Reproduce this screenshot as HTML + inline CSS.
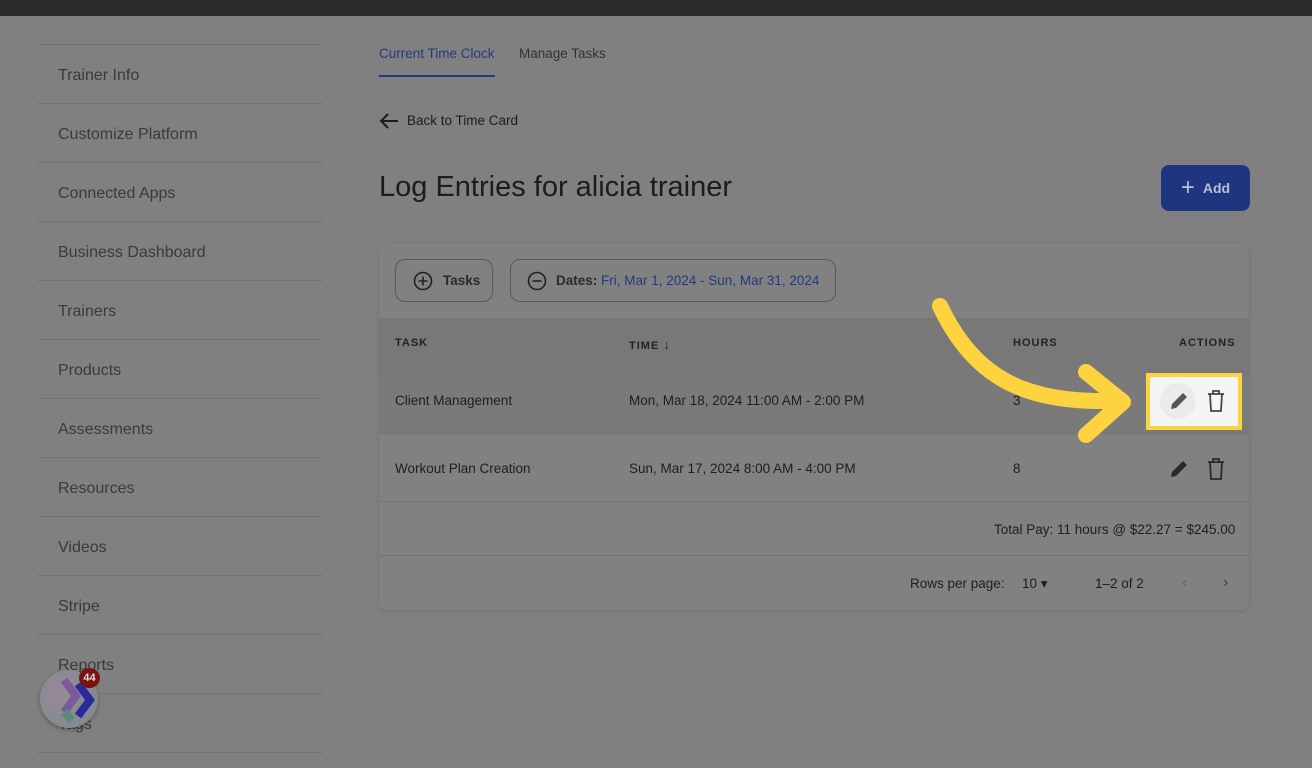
<!DOCTYPE html>
<html><head><meta charset="utf-8"><style>
*{margin:0;padding:0;box-sizing:border-box}
body{width:1312px;height:768px;overflow:hidden;background:#808080;font-family:"Liberation Sans",sans-serif;color:#1c1c1c;position:relative}
.top{position:absolute;left:0;top:0;width:1312px;height:16px;background:#2b2b2b}
.side{position:absolute;left:37px;top:44px;width:286px}
.side div{height:59px;border-top:1px solid #747474;padding-left:21px;line-height:62px;font-size:16px;color:#3a3a3a}
.abs{position:absolute}
.tab{font-size:13.5px}
.card{position:absolute;left:379px;top:244px;width:870px;height:366px;background:#818181;border-radius:8px;box-shadow:0 1px 4px rgba(0,0,0,.12)}
.btn{position:absolute;border:1px solid #5a5a5a;border-radius:10px;height:43px;font-size:13.5px;font-weight:bold;display:flex;align-items:center;color:#2a2a2a}
.th{font-size:11px;font-weight:bold;letter-spacing:1px;color:#222}
.td{font-size:13.5px;color:#1e1e1e}
</style></head><body>
<div class="top"></div>
<div class="side">
<div>Trainer Info</div><div>Customize Platform</div><div>Connected Apps</div><div>Business Dashboard</div><div>Trainers</div><div>Products</div><div>Assessments</div><div>Resources</div><div>Videos</div><div>Stripe</div><div>Reports</div><div>Tags</div><div style="height:1px"></div>
</div>
<div class="abs" style="left:40px;top:670px;width:58px;height:58px;border-radius:50%;background:radial-gradient(circle at 40% 40%,#9a8a9a,#7a8a8a);box-shadow:0 2px 5px rgba(0,0,0,.3)"></div>
<svg class="abs" style="left:50px;top:676px" width="50" height="50"><path d="M14 4 L26 20 L14 36" stroke="#7a5a9a" stroke-width="8" fill="none"/><path d="M28 8 L40 24 L28 40" stroke="#2a2a9a" stroke-width="8" fill="none"/><path d="M14 36 L22 44" stroke="#5a8a7a" stroke-width="8"/></svg>
<div class="abs" style="left:79px;top:668px;width:21px;height:20px;border-radius:50%;background:#7a1212;color:#ddd;font-size:11px;font-weight:bold;text-align:center;line-height:20px">44</div>

<div class="abs tab" style="left:379px;top:46px;color:#213b80">Current Time Clock</div>
<div class="abs" style="left:379px;top:75px;width:116px;height:2px;background:#213b80"></div>
<div class="abs tab" style="left:519px;top:46px;color:#333">Manage Tasks</div>
<svg class="abs" style="left:378px;top:111px" width="22" height="20"><path d="M20 10H3M10 3L3 10L10 17" stroke="#1c1c1c" stroke-width="2" fill="none"/></svg>
<div class="abs" style="left:407px;top:113px;font-size:13.5px">Back to Time Card</div>
<div class="abs" style="left:379px;top:171px;font-size:29px">Log Entries for alicia trainer</div>
<div class="abs" style="left:1161px;top:165px;width:89px;height:46px;border-radius:8px;background:#1f3580;color:#b8bfd6;font-size:14px;font-weight:bold;display:flex;align-items:center;justify-content:center;gap:8px"><span style="font-size:24px;font-weight:normal">+</span>Add</div>

<div class="card">
<div class="btn" style="left:16px;top:15px;width:98px;padding-left:17px"><svg width="20" height="20"><circle cx="10" cy="10" r="8.5" stroke="#222" stroke-width="1.6" fill="none"/><path d="M10 5.5v9M5.5 10h9" stroke="#222" stroke-width="1.6"/></svg><span style="margin-left:10px">Tasks</span></div>
<div class="btn" style="left:131px;top:15px;width:326px;padding-left:16px"><svg width="20" height="20"><circle cx="10" cy="10" r="8.5" stroke="#222" stroke-width="1.6" fill="none"/><path d="M5.5 10h9" stroke="#222" stroke-width="1.6"/></svg><span style="margin-left:9px">Dates: <span style="color:#213b80;font-weight:normal">Fri, Mar 1, 2024 - Sun, Mar 31, 2024</span></span></div>
<div class="abs" style="left:0;top:74px;width:870px;height:58px;background:#787878"></div>
<div class="abs th" style="left:16px;top:93px">TASK</div>
<div class="abs th" style="left:250px;top:93px">TIME <span style="font-weight:normal;font-size:13px">↓</span></div>
<div class="abs th" style="left:634px;top:93px">HOURS</div>
<div class="abs th" style="left:800px;top:93px">ACTIONS</div>
<div class="abs" style="left:0;top:132px;width:870px;height:58px;background:#7a7a7a;border-bottom:1px solid #747474"></div>
<div class="abs td" style="left:16px;top:149px">Client Management</div>
<div class="abs td" style="left:250px;top:149px">Mon, Mar 18, 2024 11:00 AM - 2:00 PM</div>
<div class="abs td" style="left:634px;top:149px">3</div>
<div class="abs" style="left:0;top:190px;width:870px;height:68px;border-bottom:1px solid #747474"></div>
<div class="abs td" style="left:16px;top:217px">Workout Plan Creation</div>
<div class="abs td" style="left:250px;top:217px">Sun, Mar 17, 2024 8:00 AM - 4:00 PM</div>
<div class="abs td" style="left:634px;top:217px">8</div>
<svg class="abs" style="left:788px;top:213px" width="24" height="24"><path d="M4 20l1-5L16 4l4 4L9 19z" fill="#2a2a2a"/></svg>
<svg class="abs" style="left:826px;top:213px" width="22" height="24"><path d="M3 5h16M8 5V2h6v3M5 5l1 17h10l1-17" stroke="#2a2a2a" stroke-width="1.8" fill="none"/></svg>
<div class="abs" style="left:0;top:258px;width:870px;height:54px;border-bottom:1px solid #747474"></div>
<div class="abs td" style="left:615px;top:278px">Total Pay: 11 hours @ $22.27 = $245.00</div>
<div class="abs td" style="left:531px;top:332px">Rows per page:</div>
<div class="abs td" style="left:643px;top:332px">10 ▾</div>
<div class="abs td" style="left:716px;top:332px">1–2 of 2</div>
<div class="abs td" style="left:803px;top:330px;color:#666;font-size:16px">‹</div>
<div class="abs td" style="left:844px;top:330px;color:#444;font-size:16px">›</div>
</div>

<div class="abs" style="left:1146px;top:373px;width:96px;height:57px;border:4px solid #fdd33f;background:#f5f5f5"></div>
<div class="abs" style="left:1160px;top:383px;width:36px;height:36px;border-radius:50%;background:#ebebeb"></div>
<svg class="abs" style="left:1167px;top:389px" width="24" height="24"><path d="M4 20l1-5L16 4l4 4L9 19z" fill="#555"/></svg>
<svg class="abs" style="left:1205px;top:389px" width="22" height="24"><path d="M3 5h16M8 5V2h6v3M5 5l1 17h10l1-17" stroke="#444" stroke-width="1.8" fill="none"/></svg>
<svg class="abs" style="left:0;top:0" width="1312" height="768"><path d="M940 306 C980 390 1040 403 1122 401" stroke="#fdd33f" stroke-width="16" stroke-linecap="round" fill="none"/><path d="M1086 372 L1123 402 L1086 435" stroke="#fdd33f" stroke-width="16" stroke-linecap="round" stroke-linejoin="round" fill="none"/></svg>
</body></html>
